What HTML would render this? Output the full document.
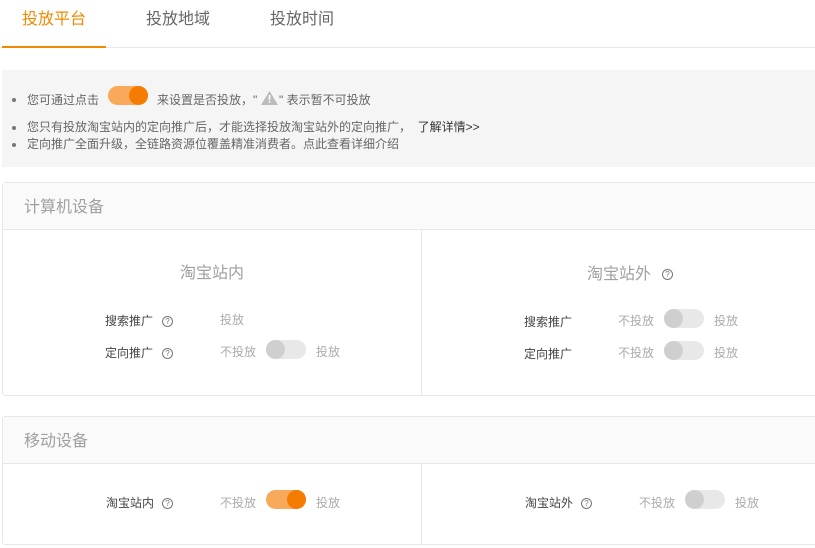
<!DOCTYPE html>
<html><head><meta charset="utf-8"><style>
*{margin:0;padding:0;box-sizing:border-box}
body{width:815px;height:548px;overflow:hidden;background:#fff;font-family:"Liberation Sans","Noto Sans CJK SC",sans-serif;position:relative;color:#333}
.a{position:absolute;white-space:nowrap;line-height:1}
.tab{font-size:16px;color:#666;top:12px}
.tip{font-size:12px;color:#666;left:27px}
.dot{position:absolute;left:12px;width:4px;height:4px;border-radius:2px;background:#777}
.box{position:absolute;left:2px;width:830px;border:1px solid #e8e8e8;border-radius:3px;background:#fff}
.hd{height:47px;background:#fafafa;border-bottom:1px solid #e8e8e8}
.ttl{font-size:16px;color:#a0a0a0}
.lbl{font-size:12px;color:#444}
.g{font-size:12px;color:#aaa}
.q{position:absolute;width:11px;height:11px;border:1px solid #777;border-radius:50%;font-size:8px;line-height:9px;text-align:center;color:#777}
.sw{position:absolute;width:40px;height:19px;border-radius:10px}
.sw.on{background:#f9a95a}
.sw.on::after{content:"";position:absolute;right:0;top:0;width:19px;height:19px;border-radius:50%;background:#f57c00}
.sw.off{background:#e8e8e8}
.sw.off::after{content:"";position:absolute;left:0;top:0;width:19px;height:19px;border-radius:50%;background:#cfcfcf}
</style></head><body>
<div class="a tab" style="left:22px;color:#f08a00">投放平台</div>
<div class="a tab" style="left:146px">投放地域</div>
<div class="a tab" style="left:270px">投放时间</div>
<div style="position:absolute;left:0;top:47px;width:815px;height:1px;background:#e8e8e8"></div>
<div style="position:absolute;left:2px;top:46px;width:104px;height:2px;background:#f08a00"></div>

<div style="position:absolute;left:2px;top:70px;width:813px;height:97px;background:#f5f5f5"></div>
<div class="dot" style="top:98px"></div>
<div class="a tip" style="top:94px">您可通过点击</div>
<div class="sw on" style="left:108px;top:86px"></div>
<div class="a tip" style="top:94px;left:157px">来设置是否投放，"</div>
<svg style="position:absolute;left:261px;top:91px" width="17" height="14" viewBox="0 0 17 14"><path d="M8.5 0L17 14H0Z" fill="#bbb"/><rect x="7.7" y="4" width="1.6" height="5" fill="#fff"/><rect x="7.7" y="10" width="1.6" height="1.6" fill="#fff"/></svg>
<div class="a tip" style="top:94px;left:279px">" 表示暂不可投放</div>
<div class="dot" style="top:126px"></div>
<div class="a tip" style="top:121px">您只有投放淘宝站内的定向推广后，才能选择投放淘宝站外的定向推广， <span style="color:#333">&nbsp;了解详情&gt;&gt;</span></div>
<div class="dot" style="top:143px"></div>
<div class="a tip" style="top:138px">定向推广全面升级，全链路资源位覆盖精准消费者。点此查看详细介绍</div>

<div class="box" style="top:182px;height:214px"><div class="hd"></div>
<div style="position:absolute;left:418px;top:47px;width:1px;height:166px;background:#e8e8e8"></div></div>
<div class="a ttl" style="left:24px;top:200px">计算机设备</div>
<div class="a ttl" style="left:180px;top:266px">淘宝站内</div>
<div class="a lbl" style="left:105px;top:315px">搜索推广</div><div class="q" style="left:162px;top:316px">?</div>
<div class="a g" style="left:220px;top:314px">投放</div>
<div class="a lbl" style="left:105px;top:347px">定向推广</div><div class="q" style="left:162px;top:348px">?</div>
<div class="a g" style="left:220px;top:346px">不投放</div><div class="sw off" style="left:266px;top:340px"></div><div class="a g" style="left:316px;top:346px">投放</div>
<div class="a ttl" style="left:587px;top:267px">淘宝站外</div><div class="q" style="left:662px;top:269px">?</div>
<div class="a lbl" style="left:524px;top:316px">搜索推广</div>
<div class="a g" style="left:618px;top:315px">不投放</div><div class="sw off" style="left:664px;top:309px"></div><div class="a g" style="left:714px;top:315px">投放</div>
<div class="a lbl" style="left:524px;top:348px">定向推广</div>
<div class="a g" style="left:618px;top:347px">不投放</div><div class="sw off" style="left:664px;top:341px"></div><div class="a g" style="left:714px;top:347px">投放</div>

<div class="box" style="top:416px;height:129px"><div class="hd"></div>
<div style="position:absolute;left:418px;top:47px;width:1px;height:81px;background:#e8e8e8"></div></div>
<div class="a ttl" style="left:24px;top:434px">移动设备</div>
<div class="a lbl" style="left:106px;top:497px">淘宝站内</div><div class="q" style="left:162px;top:498px">?</div>
<div class="a g" style="left:220px;top:497px">不投放</div><div class="sw on" style="left:266px;top:490px"></div><div class="a g" style="left:316px;top:497px">投放</div>
<div class="a lbl" style="left:525px;top:497px">淘宝站外</div><div class="q" style="left:581px;top:498px">?</div>
<div class="a g" style="left:639px;top:497px">不投放</div><div class="sw off" style="left:685px;top:490px"></div><div class="a g" style="left:735px;top:497px">投放</div>
</body></html>
